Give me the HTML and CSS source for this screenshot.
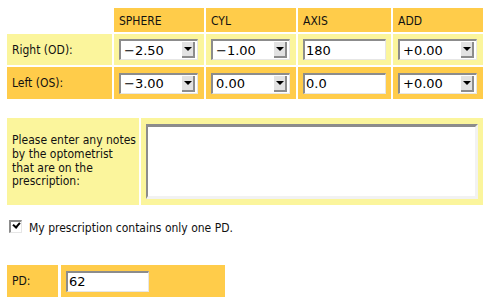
FILE: index.html
```html
<!DOCTYPE html>
<html lang="en">

<head>
    <meta charset="UTF-8">
    <title>Prescription</title>
    <link rel="stylesheet" href="styles.css">
</head>

<body>
    <form class="rx-form">
        <div class="rx-grid">
            <div class="cell blank"></div>
            <div class="cell head">SPHERE</div>
            <div class="cell head">CYL</div>
            <div class="cell head">AXIS</div>
            <div class="cell head">ADD</div>

            <div class="cell label light">Right (OD):</div>
            <div class="cell light">
                <div class="select-box">
                    <select><option>&minus;2.50</option></select>
                    <span class="drop-btn"></span>
                </div>
            </div>
            <div class="cell light">
                <div class="select-box">
                    <select><option>&minus;1.00</option></select>
                    <span class="drop-btn"></span>
                </div>
            </div>
            <div class="cell light">
                <input type="text" class="text-box" value="180">
            </div>
            <div class="cell light">
                <div class="select-box">
                    <select><option>+0.00</option></select>
                    <span class="drop-btn"></span>
                </div>
            </div>

            <div class="cell label">Left (OS):</div>
            <div class="cell">
                <div class="select-box">
                    <select><option>&minus;3.00</option></select>
                    <span class="drop-btn"></span>
                </div>
            </div>
            <div class="cell">
                <div class="select-box">
                    <select><option>0.00</option></select>
                    <span class="drop-btn"></span>
                </div>
            </div>
            <div class="cell">
                <input type="text" class="text-box" value="0.0">
            </div>
            <div class="cell">
                <div class="select-box">
                    <select><option>+0.00</option></select>
                    <span class="drop-btn"></span>
                </div>
            </div>
        </div>

        <div class="notes-row">
            <div class="cell light notes-label">Please enter any notes by the optometrist that are on the prescription:</div>
            <div class="cell light notes-field">
                <textarea class="notes-box"></textarea>
            </div>
        </div>

        <label class="one-pd">
            <input type="checkbox" class="check" checked>
            <span>My prescription contains only one PD.</span>
        </label>

        <div class="pd-row">
            <div class="cell label">PD:</div>
            <div class="cell">
                <input type="text" class="text-box pd-box" value="62">
            </div>
        </div>
    </form>
</body>

</html>
```

FILE: styles.css
```css
* {
    margin: 0;
    padding: 0;
    box-sizing: border-box;
}

body {
    margin: 8px 10px 0 7px;
    font-family: 'DejaVu Sans Condensed', 'DejaVu Sans', Verdana, sans-serif;
    font-size: 12px;
    color: #111;
    background: white;
}

.cell {
    background: #ffcc4a;
    display: flex;
    align-items: center;
    padding: 0 5px;
}

.cell.light {
    background: #fbf59c;
}

.cell.blank {
    background: transparent;
}

.rx-grid {
    display: grid;
    grid-template-columns: 105px 90px 90px 93px 90px;
    grid-template-rows: 24px 31px 32px;
    gap: 2px;
}

.head {
    padding-top: 2px;
}

/* fake mac-style popup menus */
.select-box {
    display: flex;
    align-items: center;
    width: 79px;
    height: 21px;
    background: white;
    border-top: 2px solid #8c8c8c;
    border-left: 2px solid #8c8c8c;
    border-right: 1px solid #e6e6e6;
    border-bottom: 1px solid #e6e6e6;
}

.select-box select {
    flex: 1;
    min-width: 0;
    appearance: none;
    border: none;
    background: transparent;
    font-family: 'DejaVu Sans', Verdana, sans-serif;
    font-size: 13px;
    color: #000;
    padding-left: 3px;
    outline: none;
}

.drop-btn {
    width: 13px;
    height: 16px;
    margin-right: 2px;
    background: #e2e2e2;
    border-right: 2px solid #8c8c8c;
    border-bottom: 2px solid #8c8c8c;
    display: flex;
    align-items: center;
    justify-content: center;
}

.drop-btn::after {
    content: '';
    border-left: 4px solid transparent;
    border-right: 4px solid transparent;
    border-top: 4px solid #000;
}

.text-box {
    width: 83px;
    height: 21px;
    background: white;
    border-top: 2px solid #8c8c8c;
    border-left: 2px solid #8c8c8c;
    border-right: 1px solid #e6e6e6;
    border-bottom: 1px solid #e6e6e6;
    font-family: 'DejaVu Sans', Verdana, sans-serif;
    font-size: 13px;
    padding-left: 1px;
    color: #000;
    outline: none;
}

.notes-row {
    display: grid;
    grid-template-columns: 132px 342px;
    gap: 2px;
    height: 87px;
    margin-top: 19px;
}

.notes-label {
    line-height: 13.6px;
    padding-right: 2px;
}

.notes-box {
    width: 332px;
    height: 75px;
    resize: none;
    background: white;
    border-top: 3px solid #8c8c8c;
    border-left: 2px solid #8c8c8c;
    border-right: 3px solid #f2f2f2;
    border-bottom: 3px solid #f2f2f2;
    outline: none;
}

.one-pd {
    display: flex;
    align-items: center;
    gap: 7px;
    margin: 16px 0 0 2px;
}

.check {
    appearance: none;
    position: relative;
    width: 13px;
    height: 13px;
    margin-top: -3px;
    background: white;
    border-top: 2px solid #8c8c8c;
    border-left: 2px solid #8c8c8c;
    border-right: 1px solid #e6e6e6;
    border-bottom: 1px solid #e6e6e6;
}

.check:checked::after {
    content: '';
    position: absolute;
    left: 2px;
    top: 0;
    width: 5px;
    height: 3px;
    border-left: 2px solid #000;
    border-bottom: 2px solid #000;
    transform: rotate(-50deg);
}

.pd-row {
    display: grid;
    grid-template-columns: 51px 164px;
    gap: 3px;
    height: 32px;
    margin-top: 30px;
}
```
